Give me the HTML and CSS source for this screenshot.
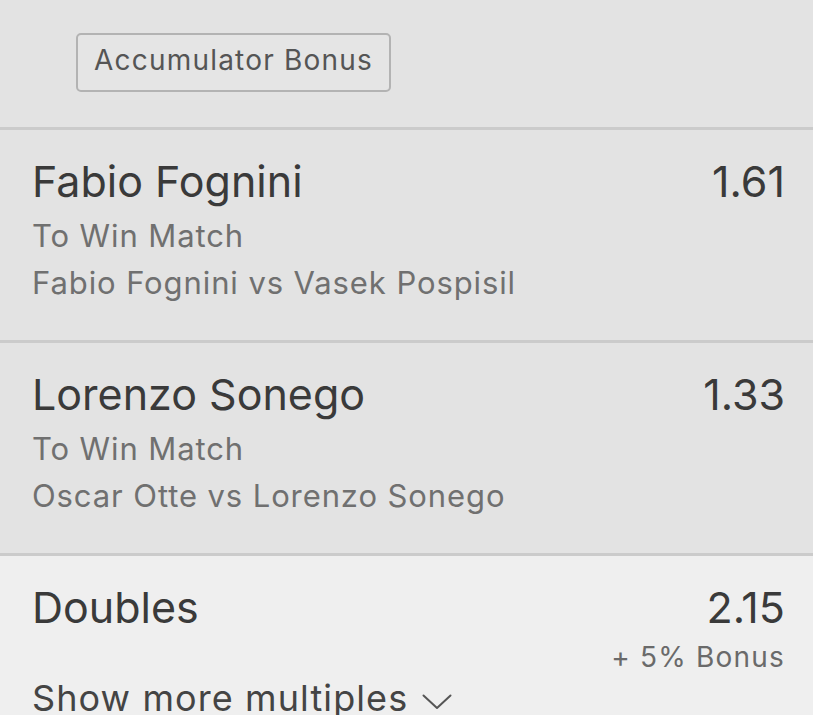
FILE: index.html
```html
<!DOCTYPE html>
<html>
<head>
<meta charset="utf-8">
<link rel="stylesheet" href="styles.css">
</head>
<body>
<div class="betslip">
  <div class="header">
    <button class="bonus-btn">Accumulator Bonus</button>
  </div>
  <div class="selection">
    <div class="sel-main">
      <div class="sel-name">Fabio Fognini</div>
      <div class="sel-odds">1.61</div>
    </div>
    <div class="sel-market">To Win Match</div>
    <div class="sel-event">Fabio Fognini vs Vasek Pospisil</div>
  </div>
  <div class="selection">
    <div class="sel-main">
      <div class="sel-name">Lorenzo Sonego</div>
      <div class="sel-odds">1.33</div>
    </div>
    <div class="sel-market">To Win Match</div>
    <div class="sel-event">Oscar Otte vs Lorenzo Sonego</div>
  </div>
  <div class="multiples">
    <div class="sel-main">
      <div class="sel-name">Doubles</div>
      <div class="sel-odds">2.15</div>
    </div>
    <div class="bonus-note">+ 5% Bonus</div>
    <div class="show-more">Show more multiples
      <svg class="chev" width="30" height="16" viewBox="0 0 30 16"><path d="M1.5 1.5 L15 14 L28.5 1.5" fill="none" stroke="#555" stroke-width="2" stroke-linecap="round" stroke-linejoin="round"/></svg>
    </div>
  </div>
</div>
</body>
</html>
```

FILE: styles.css
```css
html, body {
  margin: 0;
  padding: 0;
}
body {
  background: #e3e3e3;
  font-family: Inter, "Noto Sans", sans-serif;
  width: 813px;
  height: 715px;
  overflow: hidden;
}
.header {
  height: 127px;
  box-sizing: border-box;
  padding: 33px 0 0 76px;
}
.bonus-btn {
  box-sizing: border-box;
  height: 59px;
  width: 315px;
  padding: 0 0 5px 0;
  border: 2px solid #b3b3b3;
  border-radius: 5px;
  background: #e5e5e5;
  font-family: inherit;
  font-size: 28px;
  letter-spacing: 1.2px;
  color: #555;
}
.selection,
.multiples {
  border-top: 3px solid #cbcbcb;
  box-sizing: border-box;
  height: 213px;
  padding: 26px 28px 0 32px;
}
.multiples {
  background: #efefef;
  height: auto;
}
.sel-main {
  display: flex;
  justify-content: space-between;
  font-size: 43px;
  letter-spacing: 0;
  line-height: 50px;
  color: #3a3a3a;
}
.sel-market,
.sel-event {
  font-size: 31px;
  letter-spacing: 0.9px;
  line-height: 47px;
  color: #707070;
}
.sel-market {
  margin-top: 6px;
}
.bonus-note {
  margin-top: 5px;
  text-align: right;
  font-size: 28px;
  letter-spacing: 1.2px;
  line-height: 40px;
  color: #6a6a6a;
}
.show-more {
  display: flex;
  align-items: flex-start;
  gap: 14px;
  font-size: 36px;
  letter-spacing: 1.1px;
  line-height: 42px;
  color: #444;
}
.chev {
  margin-top: 17px;
}
```
